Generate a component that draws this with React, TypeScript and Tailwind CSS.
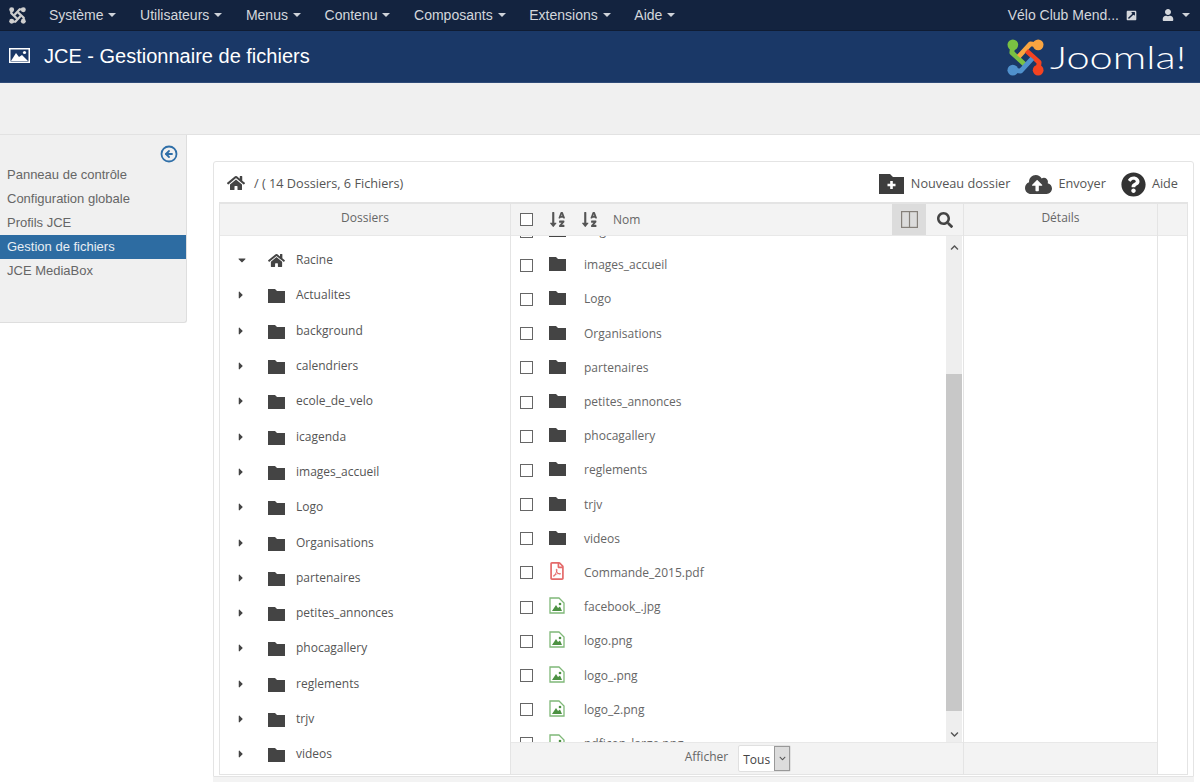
import { CircleArrowLeft } from 'lucide-react';
import {
  FaCaretDown,
  FaCaretRight,
  FaChevronDown,
  FaChevronUp,
  FaCloudUploadAlt,
  FaExternalLinkSquareAlt,
  FaHome,
  FaQuestionCircle,
  FaRegFilePdf,
  FaSearch,
  FaSortAlphaDown,
  FaUser,
} from 'react-icons/fa';

const menus = ['Système', 'Utilisateurs', 'Menus', 'Contenu', 'Composants', 'Extensions', 'Aide'];
const sideLinks = ['Panneau de contrôle', 'Configuration globale', 'Profils JCE', 'Gestion de fichiers', 'JCE MediaBox'];
const folders = [
  'Actualites',
  'background',
  'calendriers',
  'ecole_de_velo',
  'icagenda',
  'images_accueil',
  'Logo',
  'Organisations',
  'partenaires',
  'petites_annonces',
  'phocagallery',
  'reglements',
  'trjv',
  'videos',
];
const listFolders = folders.slice(4);
const files = ['facebook_.jpg', 'logo.png', 'logo_.png', 'logo_2.png', 'pdficon_large.png'];

const Caret = () => (
  <span className="inline-block w-0 h-0 ml-[5px] border-x-4 border-x-transparent border-t-4 border-t-[#cfd3da]" />
);

const JoomlaMark = ({ mono, className }: { mono?: boolean; className: string }) => {
  const colors = mono
    ? ['#cfcfcf', '#cfcfcf', '#cfcfcf', '#cfcfcf']
    : ['#7ac143', '#f9a541', '#f44321', '#5091cd'];
  return (
    <svg viewBox="0 0 38 38" className={className} fill="none" strokeWidth="5" strokeLinejoin="round">
      <circle cx="6" cy="6" r="5.5" fill={colors[0]} />
      <path d="M6 6 L5 14 L18 26" stroke={colors[0]} />
      <circle cx="32" cy="6" r="5.5" fill={colors[1]} />
      <path d="M32 6 L24 5 L12 18" stroke={colors[1]} />
      <circle cx="32" cy="32" r="5.5" fill={colors[2]} />
      <path d="M32 32 L33 24 L20 12" stroke={colors[2]} />
      <circle cx="6" cy="32" r="5.5" fill={colors[3]} />
      <path d="M6 32 L14 33 L26 20" stroke={colors[3]} />
    </svg>
  );
};

const FolderIcon = ({ className }: { className: string }) => (
  <svg viewBox="0 0 17 14" className={className} fill="currentColor">
    <path d="M0 0 H7 L9 2 H17 V14 H0 Z" />
  </svg>
);

const NewFolderIcon = () => (
  <svg viewBox="0 0 25 20" className="w-[25px] h-[20px] text-[#3d3d3d]">
    <path d="M0 0 H11 L14 3 H25 V20 H0 Z" fill="currentColor" />
    <path d="M12.5 7 V15 M8.5 11 H16.5" stroke="#fff" strokeWidth="2.6" />
  </svg>
);

const PictureIcon = () => (
  <svg viewBox="0 0 21 15" className="w-[21px] h-[15px] ml-[9px] mr-[14px] mb-[3px]">
    <rect x="0.75" y="0.75" width="19.5" height="13.5" fill="#1a3867" stroke="#fff" strokeWidth="1.5" />
    <path d="M2 13 L7 5 L10 9 L13 7 L19 13 Z" fill="#fff" />
    <circle cx="15.5" cy="4.5" r="1.6" fill="#fff" />
  </svg>
);

const ImageFileIcon = () => (
  <svg viewBox="0 0 16 17" className="w-[16px] h-[17px] mb-[3px]" fill="none">
    <path d="M1 1 H10 L15 6 V16 H1 Z" stroke="#7fb878" strokeWidth="1.3" />
    <path d="M3 14 L7 8 L9 11 L11 9.5 L13 14 Z" fill="#4c9142" />
    <circle cx="11" cy="7" r="1.3" fill="#4c9142" />
  </svg>
);

const ColumnsIcon = () => (
  <svg viewBox="0 0 17 17" className="w-[17px] h-[17px]" fill="none" stroke="#85807a" strokeWidth="1.2">
    <rect x="0.6" y="0.6" width="15.8" height="15.8" />
    <path d="M8.5 0.6 V16.4" />
  </svg>
);

const TopBar = () => (
  <div className="h-[31px] bg-[#13233f] border-b border-[#0f1c33] flex items-center font-['Liberation_Sans',sans-serif] text-[14px] text-[#d4d7dc]">
    <JoomlaMark mono className="w-[17px] h-[17px] ml-[9px] mr-[23px]" />
    <div className="flex items-center gap-[23.6px]">
      {menus.map((menu) => (
        <div key={menu} className="flex items-center">
          {menu}
          <Caret />
        </div>
      ))}
    </div>
    <div className="ml-auto flex items-center">
      <span>Vélo Club Mend...</span>
      <FaExternalLinkSquareAlt className="w-[11px] h-[11px] ml-[7px] text-[#d4d7dc]" />
      <FaUser className="w-[12px] h-[12px] ml-[25px] text-[#d4d7dc]" />
      <span className="mr-[10px] flex items-center ml-[3px]">
        <Caret />
      </span>
    </div>
  </div>
);

const TitleBar = () => (
  <div className="h-[52px] bg-[#1a3867] border-b border-[#2f4b78] flex items-center font-['Liberation_Sans',sans-serif] text-white">
    <PictureIcon />
    <h1 className="text-[20px] leading-none mb-[1px]">JCE - Gestionnaire de fichiers</h1>
    <div className="ml-auto mr-[15px] flex items-center gap-[6px] pt-[1px]">
      <JoomlaMark className="w-[37px] h-[37px]" />
      <span className="w-[135px] origin-left scale-x-[1.3] font-['Lato',sans-serif] font-light text-[32px] leading-none">
        Joomla!
      </span>
    </div>
  </div>
);

const Sidebar = () => (
  <aside className="w-[187px] h-[188px] shrink-0 bg-[#f0f0f0] border-r border-b border-[#dedede] rounded-br-[3px] font-['Liberation_Sans',sans-serif] text-[13px] text-[#666]">
    <div className="h-[28px] flex justify-end items-end pr-[8px]">
      <CircleArrowLeft className="w-[18px] h-[18px] text-[#2f6fa8]" strokeWidth={2.4} />
    </div>
    {sideLinks.map((link) => (
      <div
        key={link}
        className={`h-[24px] pl-[7px] flex items-center ${
          link === 'Gestion de fichiers' ? 'bg-[#2d6ca2] text-[#e8eef4]' : ''
        }`}
      >
        {link}
      </div>
    ))}
  </aside>
);

const TreeRow = ({ name, root }: { name: string; root?: boolean }) => (
  <div className="h-[35.3px] flex items-center text-[12px] text-[#555]">
    <span className="w-[48px] pl-[17px] text-[#444]">
      {root ? <FaCaretDown className="w-[10px] h-[12px]" /> : <FaCaretRight className="w-[8px] h-[12px]" />}
    </span>
    {root ? (
      <FaHome className="w-[17px] h-[15px] text-[#444] mr-[11px]" />
    ) : (
      <FolderIcon className="w-[17px] h-[14px] text-[#444] mr-[11px] mt-[2px]" />
    )}
    {name}
  </div>
);

const Checkbox = () => <span className="w-[13px] h-[13px] border border-[#666] bg-white shrink-0" />;

const FileRow = ({ name, kind }: { name: string; kind: 'folder' | 'pdf' | 'image' }) => (
  <div className="h-[34.2px] shrink-0 flex items-center text-[12px] text-[#666]">
    <span className="ml-[9px] mr-[16px] flex">
      <Checkbox />
    </span>
    <span className="w-[35px] flex">
      {kind === 'folder' && <FolderIcon className="w-[17px] h-[14px] text-[#444] mb-[2px]" />}
      {kind === 'pdf' && <FaRegFilePdf className="w-[16px] h-[18px] text-[#e46a6a] mb-[3px]" />}
      {kind === 'image' && <ImageFileIcon />}
    </span>
    {name}
  </div>
);

const Scrollbar = () => (
  <div className="w-[16px] mr-[1px] shrink-0 bg-[#eeeeee] flex flex-col">
    <div className="h-[138px] pt-[7px] flex justify-center">
      <FaChevronUp className="w-[9px] h-[9px] text-[#555]" />
    </div>
    <div className="h-[337px] bg-[#c8c8c8]" />
    <div className="flex-1 flex justify-center items-end pb-[3px]">
      <FaChevronDown className="w-[9px] h-[9px] text-[#555]" />
    </div>
  </div>
);

const Browser = () => (
  <div className="mx-[5px] h-[573px] flex border border-t-2 border-[#e4e4e4] text-[12px] font-['Open_Sans',sans-serif] text-[#666]">
    <div className="w-[291px] shrink-0 border-r border-[#e4e4e4] flex flex-col">
      <div className="h-[32px] bg-[#f3f3f3] border-b border-[#e8e8e8] flex items-center justify-center pb-[4px]">
        Dossiers
      </div>
      <div className="pt-[6.5px]">
        <TreeRow name="Racine" root />
        {folders.map((folder) => (
          <TreeRow key={folder} name={folder} />
        ))}
      </div>
    </div>

    <div className="w-[453px] shrink-0 border-r border-[#e4e4e4] flex flex-col">
      <div className="relative z-10 h-[32px] shrink-0 bg-[#f3f3f3] border-b border-[#e8e8e8] flex items-center">
        <span className="ml-[9px] mr-[16px] flex">
          <Checkbox />
        </span>
        <FaSortAlphaDown className="w-[17px] h-[17px] text-[#555]" />
        <FaSortAlphaDown className="w-[17px] h-[17px] text-[#555] ml-[15px]" />
        <span className="ml-[15px]">Nom</span>
        <div className="ml-auto w-[34px] h-full bg-[#dcdcdc] flex items-center justify-center">
          <ColumnsIcon />
        </div>
        <div className="w-[37px] h-full flex items-center justify-center">
          <FaSearch className="w-[16px] h-[16px] text-[#444]" />
        </div>
      </div>
      <div className="h-[506px] flex overflow-hidden">
        <div className="flex-1 flex flex-col overflow-hidden">
          <div className="-mt-[22px]">
            {listFolders.map((folder) => (
              <FileRow key={folder} name={folder} kind="folder" />
            ))}
            <FileRow name="Commande_2015.pdf" kind="pdf" />
            {files.map((file) => (
              <FileRow key={file} name={file} kind="image" />
            ))}
          </div>
        </div>
        <Scrollbar />
      </div>
      <div className="flex-1 bg-[#f3f3f3] border-t border-[#e8e8e8] flex items-center justify-center gap-[10px] pl-[2px]">
        <span className="mb-[3px]">Afficher</span>
        <div className="h-[27px] w-[53px] bg-white border border-[#e0e0e0] rounded-[2px] flex items-center">
          <span className="flex-1 pl-[4px] text-[#444] pt-[2px]">Tous</span>
          <span className="w-[16px] h-full bg-[#dcdcdc] border border-[#999] flex items-center justify-center">
            <FaChevronDown className="w-[7px] h-[7px] text-[#555]" />
          </span>
        </div>
      </div>
    </div>

    <div className="w-[194px] shrink-0 border-r border-[#e4e4e4] flex flex-col">
      <div className="h-[32px] bg-[#f3f3f3] border-b border-[#e8e8e8] flex items-center justify-center pb-[4px]">
        Détails
      </div>
      <div className="h-[506px]" />
      <div className="flex-1 bg-[#f3f3f3] border-t border-[#e8e8e8]" />
    </div>

    <div className="flex-1">
      <div className="h-[32px] bg-[#f3f3f3] border-b border-[#e8e8e8]" />
    </div>
  </div>
);

const Panel = () => (
  <div className="w-[981px] ml-[26px] mt-[26px]">
    <div className="h-[616px] border border-[#e4e4e4] rounded-t-[3px] font-['Open_Sans',sans-serif]">
      <div className="h-[40px] pt-[4px] flex items-center text-[12.7px] text-[#555]">
        <FaHome className="w-[18px] h-[16px] ml-[13px] text-[#444] mb-[2px]" />
        <span className="ml-[9px]">/ ( 14 Dossiers, 6 Fichiers)</span>
        <div className="ml-auto flex items-center mr-[15px]">
          <NewFolderIcon />
          <span className="ml-[7px]">Nouveau dossier</span>
          <FaCloudUploadAlt className="w-[27px] h-[23px] text-[#444] ml-[15px]" />
          <span className="ml-[6px]">Envoyer</span>
          <FaQuestionCircle className="w-[25px] h-[25px] text-[#333] ml-[15px]" />
          <span className="ml-[6px]">Aide</span>
        </div>
      </div>
      <Browser />
    </div>
    <div className="h-[10px] bg-[#f3f3f3]" />
  </div>
);

export default function App() {
  return (
    <div className="h-[782px] overflow-hidden bg-white">
      <TopBar />
      <TitleBar />
      <div className="h-[52px] bg-[#f0f0f0] border-b border-[#e2e2e2]" />
      <div className="flex items-start">
        <Sidebar />
        <Panel />
      </div>
    </div>
  );
}
